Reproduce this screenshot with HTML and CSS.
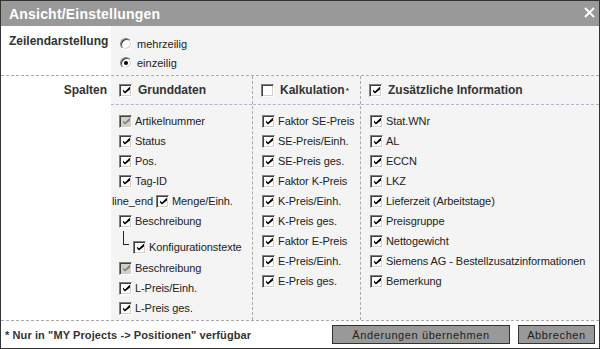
FILE: index.html
```html
<!DOCTYPE html>
<html lang="de">
<head>
  <meta charset="UTF-8" />
  <title>Ansicht/Einstellungen</title>
  <link rel="stylesheet" href="styles.css">
</head>
<body>

<div class="dialog">
  <div class="titlebar">
    <span class="title">Ansicht/Einstellungen</span>
    <svg class="close" width="11" height="11" viewBox="0 0 11 11"><path d="M1 1 L10 10 M10 1 L1 10" stroke="#fff" stroke-width="2" /></svg>
  </div>

  <div class="section lines">
    <div class="label">Zeilendarstellung</div>
    <div class="content radios">
      <div class="opt"><span class="radio"></span>mehrzeilig</div>
      <div class="opt"><span class="radio on"></span>einzeilig</div>
    </div>
  </div>

  <div class="section cols">
    <div class="label label-right">Spalten</div>
    <div class="content columns">
      <div class="col col1">
        <div class="head"><span class="cb on"></span>Grunddaten</div>
        <div class="items">
          <div class="item"><span class="cb on off"></span>Artikelnummer</div>
          <div class="item"><span class="cb on"></span>Status</div>
          <div class="item"><span class="cb on"></span>Pos.</div>
          <div class="item"><span class="cb on"></span>Tag-ID</div>
          <div class="item leak">line_end <span class="cb on"></span>Menge/Einh.</div>
          <div class="item"><span class="cb on"></span>Beschreibung</div>
          <div class="item sub"><span class="tree"></span><span class="cb on"></span>Konfigurationstexte</div>
          <div class="item"><span class="cb on off"></span>Beschreibung</div>
          <div class="item"><span class="cb on"></span>L-Preis/Einh.</div>
          <div class="item"><span class="cb on"></span>L-Preis ges.</div>
        </div>
      </div>
      <div class="col col2">
        <div class="head"><span class="cb"></span>Kalkulation<sup>*</sup></div>
        <div class="items">
          <div class="item"><span class="cb on"></span>Faktor SE-Preis</div>
          <div class="item"><span class="cb on"></span>SE-Preis/Einh.</div>
          <div class="item"><span class="cb on"></span>SE-Preis ges.</div>
          <div class="item"><span class="cb on"></span>Faktor K-Preis</div>
          <div class="item"><span class="cb on"></span>K-Preis/Einh.</div>
          <div class="item"><span class="cb on"></span>K-Preis ges.</div>
          <div class="item"><span class="cb on"></span>Faktor E-Preis</div>
          <div class="item"><span class="cb on"></span>E-Preis/Einh.</div>
          <div class="item"><span class="cb on"></span>E-Preis ges.</div>
        </div>
      </div>
      <div class="col col3">
        <div class="head"><span class="cb on"></span>Zusätzliche Information</div>
        <div class="items">
          <div class="item"><span class="cb on"></span>Stat.WNr</div>
          <div class="item"><span class="cb on"></span>AL</div>
          <div class="item"><span class="cb on"></span>ECCN</div>
          <div class="item"><span class="cb on"></span>LKZ</div>
          <div class="item"><span class="cb on"></span>Lieferzeit (Arbeitstage)</div>
          <div class="item"><span class="cb on"></span>Preisgruppe</div>
          <div class="item"><span class="cb on"></span>Nettogewicht</div>
          <div class="item"><span class="cb on"></span>Siemens AG - Bestellzusatzinformationen</div>
          <div class="item"><span class="cb on"></span>Bemerkung</div>
        </div>
      </div>
    </div>
  </div>

  <div class="footer">
    <span class="note">* Nur in "MY Projects -&gt; Positionen" verfügbar</span>
    <button class="btn btn-save">Änderungen übernehmen</button>
    <button class="btn btn-cancel">Abbrechen</button>
  </div>
</div>

</body>
</html>
```

FILE: styles.css
```css
body {
  margin: 0;
  font-family: "Liberation Sans", Arial, sans-serif;
  font-size: 11px;
  color: #222;
  background: #fff;
}
.dialog {
  width: 600px;
  height: 349px;
  box-sizing: border-box;
  border: 1px solid #333;
  display: flex;
  flex-direction: column;
  background: #fff;
}
.titlebar {
  height: 25px;
  flex: none;
  background: #999;
  color: #fff;
  display: flex;
  align-items: center;
  justify-content: space-between;
  padding: 0 4px 0 8px;
}
.title {
  font-size: 14px;
  font-weight: bold;
  letter-spacing: 0.2px;
}
.close {
  display: block;
  margin-top: -3px;
}
.section {
  display: flex;
  border-bottom: 1px dashed #aaa;
}
.label {
  width: 110px;
  box-sizing: border-box;
  padding: 8px 0 0 8px;
  font-size: 12px;
  font-weight: bold;
  color: #333;
}
.label-right {
  text-align: right;
  padding: 7px 4px 0 0;
}
.content {
  flex: 1;
  background: #f4f4f4;
}
.lines {
  height: 50px;
  flex: none;
  box-sizing: border-box;
}
.radios {
  padding: 8px 0 0 9px;
}
.opt {
  display: flex;
  align-items: center;
  height: 19px;
}
.radio {
  width: 12px;
  height: 12px;
  box-sizing: border-box;
  border-radius: 50%;
  border: 1px solid;
  border-color: #808080 #fff #fff #808080;
  box-shadow: inset 1px 1px #404040, inset -1px -1px #d4d0c8;
  background: #fff;
  margin-right: 5px;
  position: relative;
}
.radio.on::after {
  content: "";
  position: absolute;
  left: 3px;
  top: 3px;
  width: 4px;
  height: 4px;
  border-radius: 50%;
  background: #000;
}
.cols {
  flex: 1;
}
.columns {
  display: flex;
}
.col {
  border-right: 1px dashed #aaa;
  box-sizing: border-box;
}
.col1 {
  width: 142px;
}
.col2 {
  width: 108px;
}
.col3 {
  flex: 1;
  border-right: none;
}
.head {
  height: 29px;
  box-sizing: border-box;
  display: flex;
  align-items: center;
  padding-left: 8px;
  border-bottom: 1px dashed #b4b4cc;
  font-size: 12px;
  font-weight: bold;
  color: #333;
}
.head .cb {
  margin-right: 6px;
}
.head sup {
  font-size: 8px;
  margin-left: 1px;
}
.items {
  padding: 6px 0 0 8px;
}
.col2 .items, .col3 .items {
  padding-left: 9px;
}
.item {
  display: flex;
  align-items: center;
  height: 20px;
  white-space: nowrap;
  letter-spacing: -0.08px;
}
.cb {
  width: 13px;
  height: 13px;
  box-sizing: border-box;
  border: 1px solid;
  border-color: #808080 #fff #fff #808080;
  box-shadow: inset 1px 1px #404040, inset -1px -1px #d4d0c8;
  background: #fff;
  margin-right: 3px;
  flex: none;
  position: relative;
}
.cb.on::after {
  content: "";
  position: absolute;
  left: 3px;
  top: 2px;
  width: 7px;
  height: 7px;
  background: #000;
  clip-path: polygon(0 43%, 28% 71%, 100% 0, 100% 43%, 28% 100%, 0 71%);
}
.cb.off {
  background: #d4d0c8;
}
.cb.off::after {
  background: #808080;
}
.leak {
  margin-left: -7px;
}
.leak .cb {
  margin-left: 3px;
}
.sub {
  margin: 6px 0 1px 0;
  position: relative;
  padding-left: 14px;
}
.tree {
  position: absolute;
  left: 4px;
  top: -6px;
  width: 5px;
  height: 13px;
  border-left: 1px solid #222;
  border-bottom: 1px solid #222;
}
.footer {
  height: 27px;
  flex: none;
  display: flex;
  align-items: center;
  padding: 0 4px 0 4px;
  gap: 8px;
}
.note {
  flex: 1;
  font-size: 11px;
  font-weight: bold;
  letter-spacing: 0.1px;
  color: #333;
}
.btn {
  height: 19px;
  background: #999;
  border: 1px solid #333;
  color: #222;
  font-family: "Liberation Sans", Arial, sans-serif;
  font-size: 11px;
  letter-spacing: 0.6px;
  padding: 0;
}
.btn-save {
  width: 178px;
}
.btn-cancel {
  width: 77px;
}
```
